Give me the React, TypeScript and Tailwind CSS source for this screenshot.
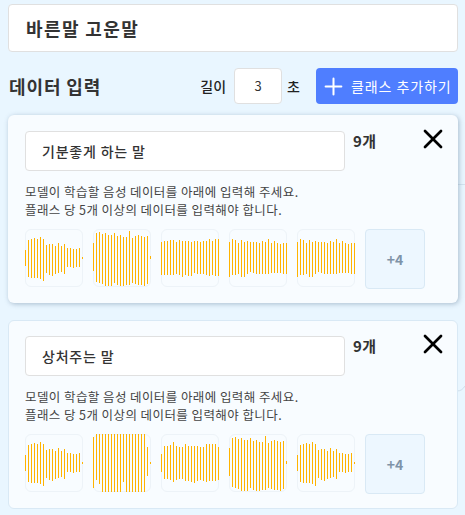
import { Plus, X } from 'lucide-react';

// bar extents [top, bottom] in px inside a 58px box
type Bars = [number, number][];

const waveA: Bars = [[21, 37], [11, 48], [10, 49], [9, 49], [10, 49], [8, 50], [10, 52], [16, 44], [15, 46], [15, 47], [17, 45], [14, 44], [17, 43], [15, 45], [19, 38], [19, 38], [20, 39], [20, 38], [19, 38], [28, 30]];
const waveB: Bars = [[14, 42], [4, 53], [3, 54], [5, 55], [4, 57], [6, 57], [6, 57], [4, 54], [7, 56], [6, 57], [8, 57], [8, 56], [2, 56], [9, 54], [7, 55], [6, 56], [7, 56], [8, 57], [7, 55], [27, 30]];
const waveC: Bars = [[13, 46], [12, 46], [12, 46], [11, 46], [11, 46], [13, 45], [11, 46], [12, 48], [12, 46], [12, 47], [13, 47], [12, 44], [12, 45], [13, 45], [12, 45], [12, 46], [10, 47], [12, 46], [10, 47], [10, 47]];
const waveD: Bars = [[13, 48], [10, 46], [11, 46], [14, 45], [11, 48], [13, 48], [12, 45], [13, 43], [13, 44], [13, 45], [14, 45], [12, 45], [13, 45], [10, 45], [14, 44], [12, 44], [14, 44], [15, 44], [14, 45], [14, 45]];
const waveB2: Bars = [[3, 54], [0, 46], [0, 50], [0, 58], [0, 58], [0, 58], [0, 58], [0, 58], [0, 58], [0, 58], [0, 48], [0, 58], [0, 58], [0, 58], [0, 58], [0, 58], [0, 58], [0, 58], [13, 42], [28, 30]];
const waveC2: Bars = [[20, 38], [12, 45], [12, 45], [11, 46], [8, 48], [12, 46], [13, 45], [13, 45], [10, 47], [12, 47], [12, 48], [12, 49], [12, 47], [13, 46], [13, 47], [10, 48], [10, 47], [10, 47], [10, 47], [13, 46]];

const Wave = ({ bars }: { bars: Bars }) => (
  <div className="w-[58px] h-[58px] rounded-[6px] border border-[#edf3f8] relative shrink-0">
    <svg width="58" height="58" className="absolute -left-px -top-px" shapeRendering="crispEdges">
      {bars.map(([top, bottom], i) => (
        <rect key={i} x={i * 3} y={top} width="1" height={bottom - top} fill="#ffb300" />
      ))}
    </svg>
  </div>
);

const ClassCard = ({ name, waves, raised }: { name: string; waves: Bars[]; raised?: boolean }) => (
  <div
    className={
      raised
        ? 'w-[450px] h-[188px] rounded-[6px] bg-[#f8fcff] px-4 pt-[15px] border border-transparent shadow-[1px_1px_5px_rgba(70,100,130,0.4)]'
        : 'w-[450px] h-[189px] rounded-[6px] bg-[#f8fcff] px-4 pt-[15px] border border-[#d9e9f5]'
    }
  >
    <div className="flex items-start">
      <div className="w-[320px] h-10 rounded-[4px] bg-white border border-[#e0e0e0] pl-[16px] flex items-center text-[14px] font-medium tracking-[0.8px] text-[#333]">
        {name}
      </div>
      <span className="ml-2 text-[15px] leading-5 font-bold tracking-[0.5px] text-[#333]">9개</span>
      <X className="ml-auto -mr-2 w-8 h-8 -mt-2 text-black shrink-0" strokeWidth={2} />
    </div>
    <p className="mt-3 text-[12.5px] leading-[18px] tracking-[0.42px] text-[#444]">
      모델이 학습할 음성 데이터를 아래에 입력해 주세요.
      <br />
      플래스 당 5개 이상의 데이터를 입력해야 합니다.
    </p>
    <div className="mt-[10px] flex items-start gap-[10px]">
      {waves.map((w, i) => (
        <Wave key={i} bars={w} />
      ))}
      <div className="w-[60px] h-[60px] shrink-0 rounded-[4px] bg-[#edf7ff] border border-[#d9e9f5] flex items-center justify-center text-[14px] font-bold text-[#7f93a8]">
        +4
      </div>
    </div>
  </div>
);

export default function App() {
  return (
    <div className="relative w-[465px] h-[515px] overflow-hidden bg-[#e9f6ff] pt-1 pl-2 font-['Noto_Sans_CJK_KR','Noto_Sans',sans-serif]">
      {/* shape peeking out behind the cards */}
      <svg width="8" height="220" className="absolute right-0 top-[180px]">
        <path d="M0 4.5H8" stroke="#d3e3ef" fill="none" />
        <path d="M0 211C4 211 6 209 8 206" stroke="#cfdfeb" fill="none" />
      </svg>

      <div className="relative w-[450px] h-12 rounded-[4px] bg-white border border-[#e0e0e0] pl-[17px] flex items-center text-[18px] font-bold tracking-[1.4px] text-[#333]">
        바른말 고운말
      </div>

      <div className="relative mt-4 w-[450px] h-9 flex items-center">
        <h2 className="ml-px text-[18px] font-bold tracking-[0.9px] text-[#333]">데이터 입력</h2>
        <span className="ml-auto text-[14px] font-medium text-[#222]">길이</span>
        <div className="ml-2 w-12 h-9 rounded-[4px] bg-white border border-[#e0e0e0] flex items-center justify-center text-[13px] text-[#333]">
          3
        </div>
        <span className="ml-[5px] text-[14px] font-medium text-[#222]">초</span>
        <button className="ml-[16px] w-[142px] h-9 rounded-[4px] bg-[#4f7eff] flex items-center pl-1 text-[14px] tracking-[0.9px] text-white">
          <Plus className="w-[27px] h-[27px] shrink-0" strokeWidth={1.8} />
          <span className="ml-1">클래스 추가하기</span>
        </button>
      </div>

      <div className="relative mt-[11px] flex flex-col gap-[17px]">
        <ClassCard name="기분좋게 하는 말" waves={[waveA, waveB, waveC, waveD, waveD]} raised />
        <ClassCard name="상처주는 말" waves={[waveA, waveB2, waveC2, waveB, waveA]} />
      </div>
    </div>
  );
}
